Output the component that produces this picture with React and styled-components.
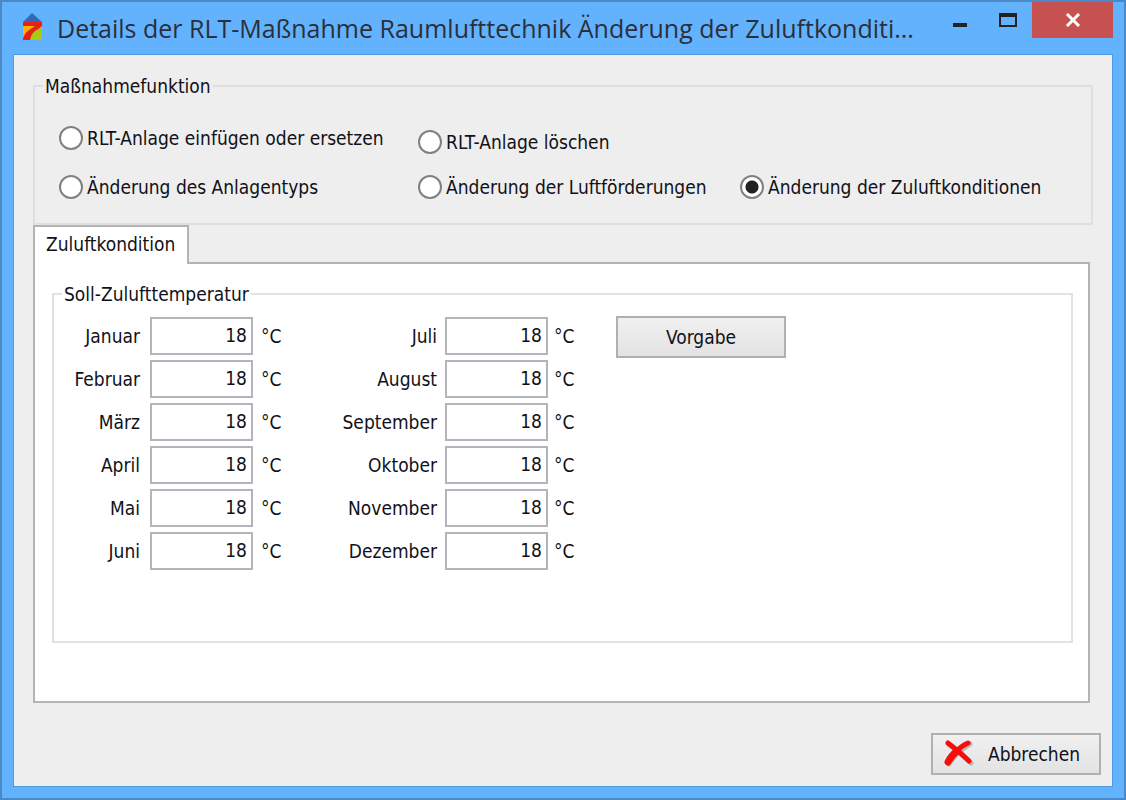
import React, { useState } from 'react';
import styled, { createGlobalStyle } from 'styled-components';

const GlobalStyle = createGlobalStyle`
  * {
    box-sizing: border-box;
  }

  body {
    margin: 0;
    color: #111118;
    font-family: 'DejaVu Sans Condensed', 'DejaVu Sans', sans-serif;
    font-stretch: condensed;
    font-size: 19px;
    line-height: 24px;
  }
`;

const Window = styled.div`
  display: flex;
  flex-direction: column;
  min-height: 100vh;
  padding: 0 11px 11px;
  border: 2px solid #4a88c6;
  background: #63b2fd;
`;

const TitleBar = styled.header`
  display: flex;
  align-items: center;
  gap: 14px;
  height: 52px;
  padding-left: 10px;
`;

const Title = styled.h1`
  flex: 1;
  min-width: 0;
  margin: 0;
  color: #2b2f3a;
  font-family: 'Open Sans', sans-serif;
  font-stretch: normal;
  font-size: 25px;
  font-weight: 400;
  line-height: 36px;
  white-space: nowrap;
`;

const WindowButtons = styled.div`
  display: flex;
  align-self: flex-start;
`;

const WindowButton = styled.button`
  display: flex;
  align-items: center;
  justify-content: center;
  width: ${(props) => (props.$close ? 81 : 48)}px;
  height: 36px;
  padding: 0;
  border: 0;
  background: ${(props) => (props.$close ? '#c75050' : 'transparent')};
`;

const Client = styled.main`
  display: flex;
  flex: 1;
  flex-direction: column;
  padding: 19px 19px 11px;
  border: 1px solid #5298dc;
  background: #eeeeee;
`;

const Group = styled.fieldset`
  min-width: 0;
  margin: 0;
  padding: 0;
  border: 2px solid ${(props) => props.$line};
  flex: ${(props) => (props.$grow ? 1 : 'none')};
`;

const Legend = styled.legend`
  margin-left: 8px;
  padding: 0 2px;
`;

const Options = styled.div`
  display: grid;
  grid-template-columns: 359px 322px auto;
  justify-content: start;
  row-gap: 21px;
  padding: 28px 24px 24px;
`;

const Option = styled.label`
  display: flex;
  align-items: center;
  gap: 4px;
  align-self: ${(props) => (props.$low ? 'end' : 'start')};
  min-height: ${(props) => (props.$tall ? 28 : 24)}px;
  padding-bottom: ${(props) => (props.$tall ? 4 : 0)}px;
  white-space: nowrap;
`;

const Radio = styled.input`
  flex: none;
  width: 24px;
  height: 24px;
  margin: 0;
  appearance: none;
  border: 2px solid #808080;
  border-radius: 50%;
  background: #ffffff;

  &:checked {
    background: radial-gradient(circle, #222222 6px, #ffffff 7px);
  }
`;

const Tabs = styled.div`
  display: flex;
`;

const Tab = styled.button`
  z-index: 1;
  height: 39px;
  margin-bottom: -2px;
  padding: 0 12px 4px 11px;
  border: 2px solid #b4b4b4;
  border-bottom: 0;
  background: #ffffff;
  color: inherit;
  font: inherit;
`;

const TabPanel = styled.section`
  display: flex;
  flex: 1;
  flex-direction: column;
  margin-right: 3px;
  padding: 18px 15px 58px 17px;
  border: 2px solid #b4b4b4;
  background: #ffffff;
`;

const Temperatures = styled.div`
  display: flex;
  align-items: flex-start;
  padding: 10px 18px;
`;

const Months = styled.div`
  display: grid;
  grid-template-columns: ${(props) => props.$labelWidth}px 103px auto;
  align-items: center;
  gap: 5px ${(props) => props.$gap}px;
  margin: 1px ${(props) => props.$after}px 0 0;
`;

const MonthLabel = styled.label`
  padding-right: 2px;
  text-align: right;
`;

const MonthInput = styled.input`
  width: 100%;
  height: 38px;
  padding: 0 4px 2px;
  border: 2px solid #b4b4ba;
  background: #ffffff;
  color: inherit;
  font: inherit;
  text-align: right;
`;

const Unit = styled.span`
  width: 24px;
`;

const Button = styled.button`
  display: flex;
  align-items: center;
  justify-content: center;
  gap: 14px;
  width: 170px;
  height: 42px;
  padding: 0;
  border: 2px solid #b0b0b0;
  background: linear-gradient(#f0f0f0, #e3e3e3);
  color: inherit;
  font: inherit;
`;

const CancelButton = styled(Button)`
  padding-right: 8px;
`;

const Footer = styled.footer`
  display: flex;
  justify-content: flex-end;
  margin: 30px -8px 0 0;
`;

const OPTIONS = [
  { id: 'insert', label: 'RLT-Anlage einfügen oder ersetzen', tall: true },
  { id: 'delete', label: 'RLT-Anlage löschen', low: true },
  { id: 'type', label: 'Änderung des Anlagentyps' },
  { id: 'flow', label: 'Änderung der Luftförderungen' },
  { id: 'condition', label: 'Änderung der Zuluftkonditionen' },
];

const FIRST_HALF = ['Januar', 'Februar', 'März', 'April', 'Mai', 'Juni'];
const SECOND_HALF = [
  'Juli',
  'August',
  'September',
  'Oktober',
  'November',
  'Dezember',
];

const AppLogo = () => (
  <svg width="20" height="30" viewBox="0 0 20 30" aria-hidden="true">
    <path d="M0 9 L9 0 L19 9 Z" fill="#3268b8" />
    <path d="M0 9 H19 V27 H0 Z" fill="#e32119" />
    <path d="M0 13 H12 Q9 15 6 17 Q3 19 1 23 L0 25 Z" fill="#f9b200" />
    <path d="M19 13 V27 H7 Q8 21 12 18 Q16 16 19 13 Z" fill="#a8c813" />
  </svg>
);

const CancelIcon = () => (
  <svg
    width="30"
    height="28"
    viewBox="0 0 30 28"
    fill="none"
    strokeLinecap="round"
    aria-hidden="true"
  >
    <g stroke="#8a8a8a" strokeOpacity="0.5" transform="translate(1 1)">
      <path d="M4 4 Q15 11 26 22" strokeWidth="5" />
      <path d="M25 3 Q10 12 4 23" strokeWidth="5" />
    </g>
    <g stroke="#f80d0d">
      <path d="M4 3 Q15 11 25 21" strokeWidth="5" />
      <path d="M24 3 Q17 6 12 12" strokeWidth="5" />
      <path d="M13 11 Q7 16 4 22" strokeWidth="7" />
    </g>
  </svg>
);

const MonthColumn = ({ months, values, onChange, ...layout }) => (
  <Months {...layout}>
    {months.map((month) => (
      <React.Fragment key={month}>
        <MonthLabel htmlFor={month}>{month}</MonthLabel>
        <MonthInput
          id={month}
          value={values[month]}
          onChange={(e) => onChange(month, e.target.value)}
        />
        <Unit>°C</Unit>
      </React.Fragment>
    ))}
  </Months>
);

const defaults = () =>
  Object.fromEntries([...FIRST_HALF, ...SECOND_HALF].map((m) => [m, '18']));

const App = () => {
  const [option, setOption] = useState('condition');
  const [values, setValues] = useState(defaults);

  function handleChange(month, value) {
    setValues({ ...values, [month]: value });
  }

  const renderOption = (item) => (
    <Option key={item.id} $tall={item.tall} $low={item.low}>
      <Radio
        type="radio"
        name="option"
        checked={option === item.id}
        onChange={() => setOption(item.id)}
      />
      {item.label}
    </Option>
  );

  return (
    <>
      <GlobalStyle />
      <Window>
        <TitleBar>
          <AppLogo />
          <Title>
            Details der RLT-Maßnahme Raumlufttechnik Änderung der Zuluftkonditi...
          </Title>
          <WindowButtons>
            <WindowButton aria-label="Minimieren">
              <svg width="16" height="20" viewBox="0 0 16 20">
                <path d="M1 13 H15 V17 H1 Z" fill="#222222" />
              </svg>
            </WindowButton>
            <WindowButton aria-label="Maximieren">
              <svg width="18" height="14" viewBox="0 0 18 14">
                <path
                  d="M0 0 H18 V14 H0 Z M2 4 V12 H16 V4 Z"
                  fill="#222222"
                  fillRule="evenodd"
                />
              </svg>
            </WindowButton>
            <WindowButton $close aria-label="Schließen">
              <svg width="16" height="14" viewBox="0 0 16 14">
                <path d="M2 1 L14 13 M14 1 L2 13" stroke="#fff" strokeWidth="3" />
              </svg>
            </WindowButton>
          </WindowButtons>
        </TitleBar>
        <Client>
          <Group $line="#dfdfdf">
            <Legend>Maßnahmefunktion</Legend>
            <Options>
              {OPTIONS.slice(0, 2).map(renderOption)}
              <span />
              {OPTIONS.slice(2).map(renderOption)}
            </Options>
          </Group>
          <Tabs role="tablist">
            <Tab role="tab" aria-selected="true">
              Zuluftkondition
            </Tab>
          </Tabs>
          <TabPanel>
            <Group $grow $line="#e2e2e2">
              <Legend>Soll-Zulufttemperatur</Legend>
              <Temperatures>
                <MonthColumn
                  months={FIRST_HALF}
                  values={values}
                  onChange={handleChange}
                  $labelWidth={70}
                  $gap={8}
                  $after={56}
                />
                <MonthColumn
                  months={SECOND_HALF}
                  values={values}
                  onChange={handleChange}
                  $labelWidth={98}
                  $gap={6}
                  $after={38}
                />
                <Button type="button" onClick={() => setValues(defaults())}>
                  Vorgabe
                </Button>
              </Temperatures>
            </Group>
          </TabPanel>
          <Footer>
            <CancelButton type="button">
              <CancelIcon />
              Abbrechen
            </CancelButton>
          </Footer>
        </Client>
      </Window>
    </>
  );
};

export default App;
